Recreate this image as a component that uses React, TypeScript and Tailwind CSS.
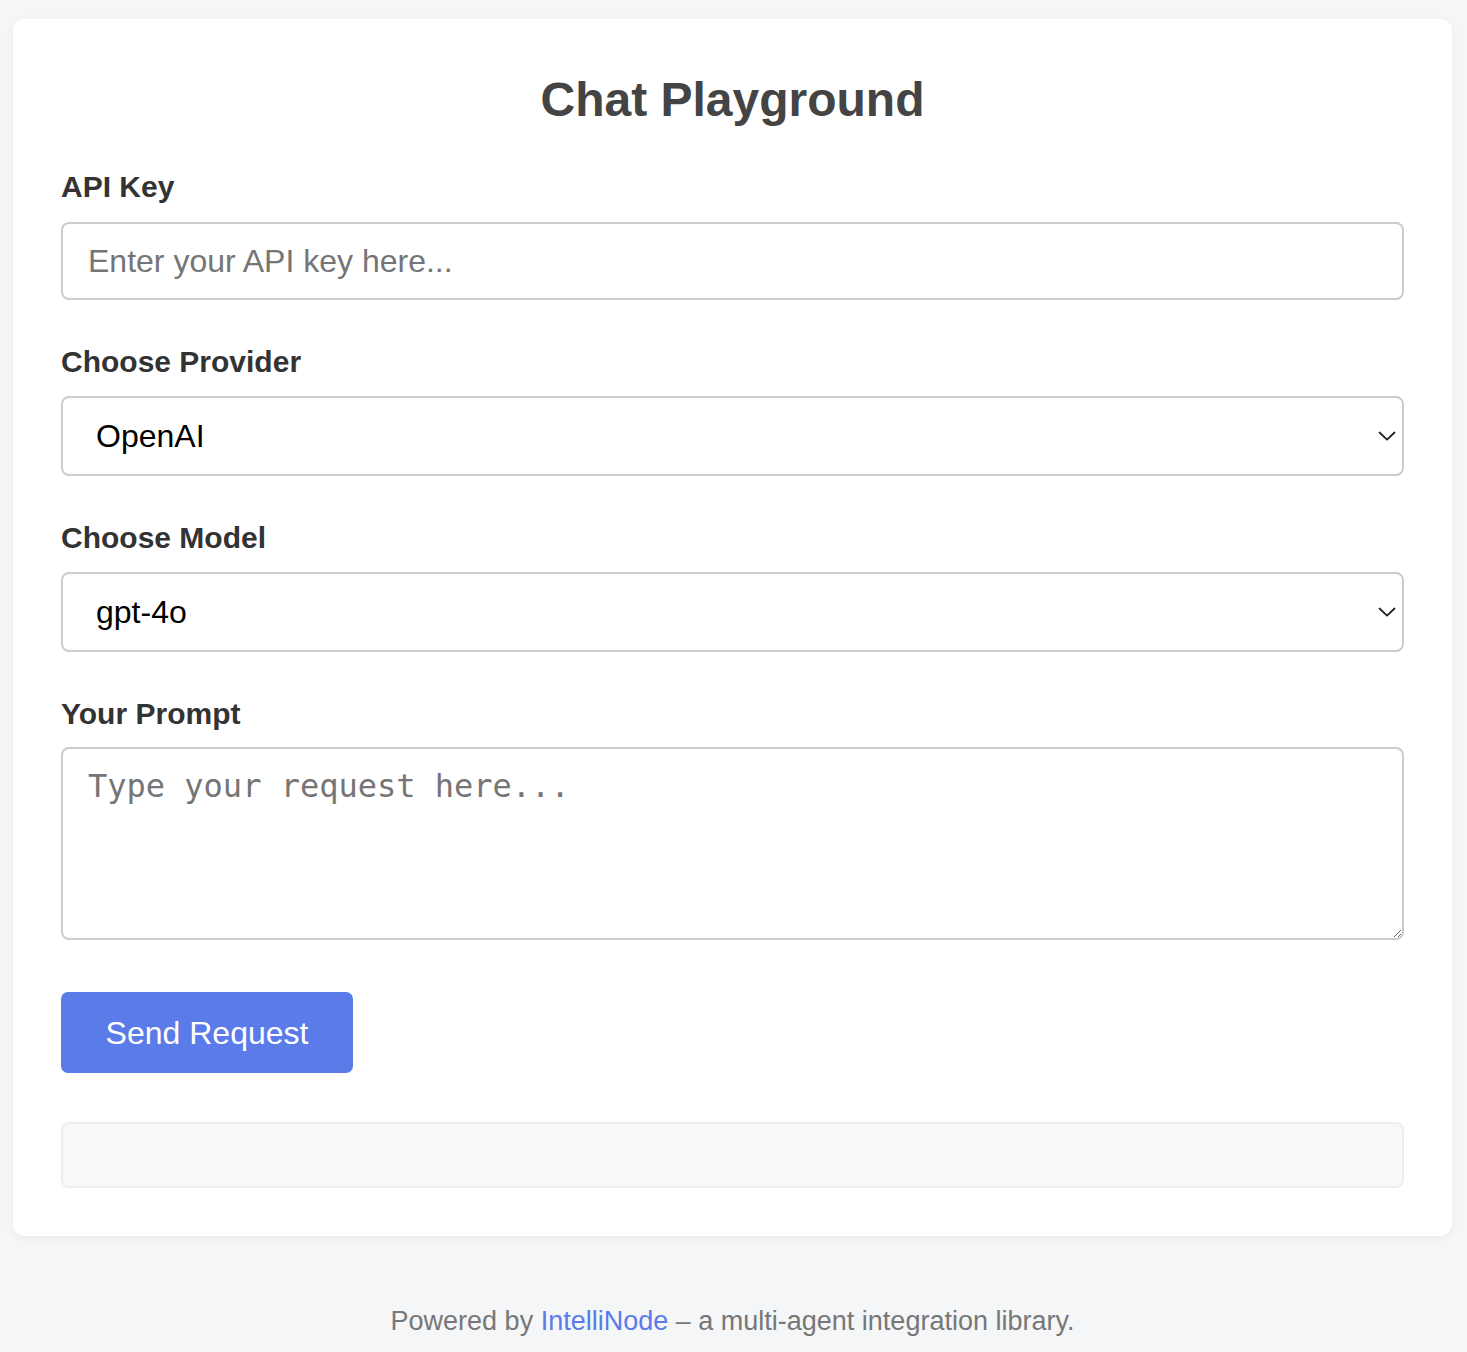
import { useState } from "react";

const PROVIDERS = ["OpenAI", "Anthropic", "Cohere", "Gemini", "Mistral"];
const MODELS = ["gpt-4o", "gpt-4o-mini", "gpt-4-turbo", "o1-preview"];

function Chevron() {
  return (
    <svg
      viewBox="0 0 18 11"
      aria-hidden="true"
      className="pointer-events-none absolute right-[8px] top-1/2 h-[11px] w-[18px] -translate-y-1/2"
      fill="none"
      stroke="#222"
      strokeWidth="1.8"
      strokeLinecap="round"
      strokeLinejoin="round"
    >
      <path d="M1.5 2 9 9.2 16.5 2" />
    </svg>
  );
}

function FieldLabel({ htmlFor, children, first = false }: { htmlFor: string; children: string; first?: boolean }) {
  return (
    <label
      htmlFor={htmlFor}
      className={[
        "block text-[30px] font-bold leading-[35px] text-[#333]",
        first ? "mt-[41px]" : "mt-[44px]",
      ].join(" ")}
    >
      {children}
    </label>
  );
}

export default function App() {
  const [provider, setProvider] = useState("OpenAI");
  const [model, setModel] = useState("gpt-4o");
  const [apiKey, setApiKey] = useState("");
  const [prompt, setPrompt] = useState("");

  return (
    <div className="min-h-screen bg-[#f5f6f8] pl-[13px] pr-[15px] pt-[19px] pb-[15px] font-['Liberation_Sans',Arial,sans-serif]">
      <div className="rounded-[12px] bg-white px-[48px] pb-[48px] pt-[53px] shadow-[0_2px_10px_rgba(0,0,0,0.05)]">
        <h1 className="text-center text-[48px] font-bold leading-[56px] text-[#444]">
          Chat Playground
        </h1>

        <FieldLabel htmlFor="api-key" first>
          API Key
        </FieldLabel>
        <input
          id="api-key"
          type="password"
          value={apiKey}
          onChange={(e) => setApiKey(e.target.value)}
          placeholder="Enter your API key here..."
          className="mt-[18px] block h-[78px] w-full rounded-[8px] border-2 border-[#ccc] bg-white px-[25px] text-[32px] text-black outline-none placeholder:text-[#757575]"
        />

        <FieldLabel htmlFor="provider">Choose Provider</FieldLabel>
        <div className="relative mt-[17px]">
          <select
            id="provider"
            value={provider}
            onChange={(e) => setProvider(e.target.value)}
            className="block h-[80px] w-full appearance-none rounded-[8px] border-2 border-[#ccc] bg-white pl-[33px] pr-[40px] text-[32px] text-black outline-none"
          >
            {PROVIDERS.map((p) => (
              <option key={p}>{p}</option>
            ))}
          </select>
          <Chevron />
        </div>

        <FieldLabel htmlFor="model">Choose Model</FieldLabel>
        <div className="relative mt-[17px]">
          <select
            id="model"
            value={model}
            onChange={(e) => setModel(e.target.value)}
            className="block h-[80px] w-full appearance-none rounded-[8px] border-2 border-[#ccc] bg-white pl-[33px] pr-[40px] text-[32px] text-black outline-none"
          >
            {MODELS.map((m) => (
              <option key={m}>{m}</option>
            ))}
          </select>
          <Chevron />
        </div>

        <FieldLabel htmlFor="prompt">Your Prompt</FieldLabel>
        <textarea
          id="prompt"
          value={prompt}
          onChange={(e) => setPrompt(e.target.value)}
          placeholder="Type your request here..."
          className="mt-[16px] block h-[193px] w-full rounded-[8px] border-2 border-[#ccc] bg-white px-[25px] pt-[19px] font-['DejaVu_Sans_Mono',monospace] text-[32px] leading-[37px] text-black outline-none placeholder:text-[#757575]"
        />

        <button
          type="button"
          className="mt-[52px] flex h-[81px] w-[292px] items-center justify-center rounded-[7px] bg-[#5a7be8] text-[32px] text-white"
        >
          Send Request
        </button>

        <div className="mt-[49px] h-[66px] w-full rounded-[8px] border-2 border-[#eee] bg-[#f9f9f9]" />
      </div>

      <p className="mt-[70px] text-center text-[27px] leading-[31px] text-[#777]">
        Powered by{" "}
        <a href="#" className="text-[#5a7be8]">
          IntelliNode
        </a>{" "}
        – a multi-agent integration library.
      </p>
    </div>
  );
}
